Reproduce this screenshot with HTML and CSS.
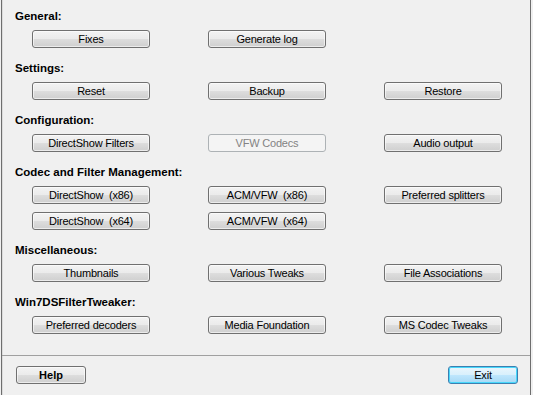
FILE: index.html
```html
<!DOCTYPE html>
<html>
<head>
<meta charset="utf-8">
<link rel="stylesheet" href="styles.css">
</head>
<body>
<div class="window">
  <div class="content">
    <section class="group">
      <div class="label">General:</div>
      <div class="grid">
        <button class="btn">Fixes</button>
        <button class="btn">Generate log</button>
      </div>
    </section>
    <section class="group">
      <div class="label">Settings:</div>
      <div class="grid">
        <button class="btn">Reset</button>
        <button class="btn">Backup</button>
        <button class="btn">Restore</button>
      </div>
    </section>
    <section class="group">
      <div class="label">Configuration:</div>
      <div class="grid">
        <button class="btn">DirectShow Filters</button>
        <button class="btn disabled">VFW Codecs</button>
        <button class="btn">Audio output</button>
      </div>
    </section>
    <section class="group">
      <div class="label">Codec and Filter Management:</div>
      <div class="grid">
        <button class="btn">DirectShow&nbsp; (x86)</button>
        <button class="btn">ACM/VFW&nbsp; (x86)</button>
        <button class="btn">Preferred splitters</button>
        <button class="btn">DirectShow&nbsp; (x64)</button>
        <button class="btn">ACM/VFW&nbsp; (x64)</button>
      </div>
    </section>
    <section class="group">
      <div class="label">Miscellaneous:</div>
      <div class="grid">
        <button class="btn">Thumbnails</button>
        <button class="btn">Various Tweaks</button>
        <button class="btn">File Associations</button>
      </div>
    </section>
    <section class="group">
      <div class="label">Win7DSFilterTweaker:</div>
      <div class="grid">
        <button class="btn">Preferred decoders</button>
        <button class="btn">Media Foundation</button>
        <button class="btn">MS Codec Tweaks</button>
      </div>
    </section>
  </div>
  <div class="footer">
    <button class="btn small bold">Help</button>
    <button class="btn small default">Exit</button>
  </div>
</div>
</body>
</html>
```

FILE: styles.css
```css
html, body {
  margin: 0;
  padding: 0;
  background: #f0f0f0;
}
body {
  width: 533px;
  height: 395px;
  overflow: hidden;
  font-family: "Liberation Sans", Arial, sans-serif;
  font-size: 11px;
  color: #000;
}
.window {
  margin-left: 1px;
  width: 528px;
  height: 395px;
  border-left: 1px solid #6e6e6e;
  border-right: 1px solid #6e6e6e;
  box-shadow: inset 1px 0 0 #dcdcdc;
  box-sizing: content-box;
  display: flex;
  flex-direction: column;
}
.content {
  padding: 9px 0 0 13px;
  display: flex;
  flex-direction: column;
  gap: 13px;
  height: 356px;
  box-sizing: border-box;
  border-bottom: 1px solid #a0a0a0;
  flex: none;
}
.label {
  font-weight: bold;
  font-size: 11.5px;
  line-height: 14px;
  height: 14px;
  margin-bottom: 7px;
}
.grid {
  display: grid;
  grid-template-columns: 118px 118px 118px;
  column-gap: 58px;
  row-gap: 8px;
  padding-left: 17px;
}
.btn {
  font-family: inherit;
  font-size: 11px;
  letter-spacing: -0.2px;
  color: #000;
  height: 18px;
  width: 118px;
  padding: 0;
  margin: 0;
  border: 1px solid #707070;
  border-radius: 3px;
  background: linear-gradient(#f3f3f3 0%, #ebebeb 48%, #dddddd 52%, #cfcfcf 100%);
  box-shadow: inset 0 0 0 1px rgba(255,255,255,0.6);
  line-height: 16px;
  text-align: center;
}
.btn.disabled {
  border-color: #adb2b5;
  background: #f4f4f4;
  color: #838383;
  box-shadow: none;
}
.footer {
  display: flex;
  justify-content: space-between;
  padding: 10px 12px 0 14px;
}
.btn.small {
  width: 70px;
}
.btn.bold {
  font-weight: bold;
  letter-spacing: 0;
}
.btn.default {
  border-color: #3c7fb1;
  background: linear-gradient(#eaf6fd 0%, #d9f0fc 48%, #bee6fd 52%, #a7d9f5 100%);
  box-shadow: inset 0 0 0 1px #48d8fb;
}
```
